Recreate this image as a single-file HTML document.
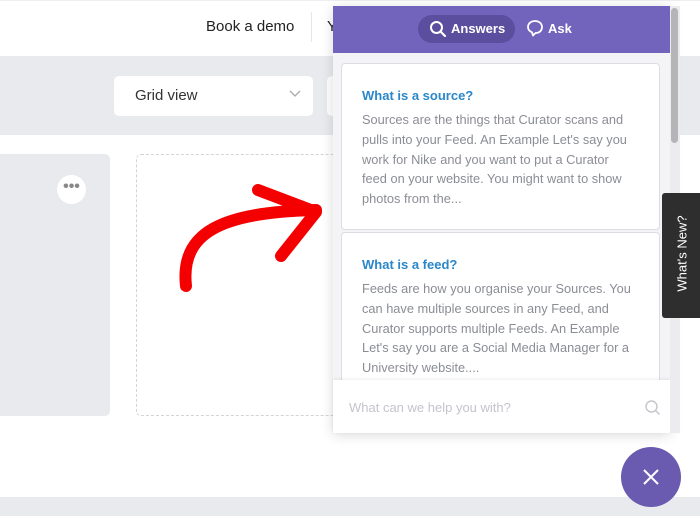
<!DOCTYPE html>
<html><head><style>
body{margin:0;width:700px;height:516px;overflow:hidden;position:relative;font-family:"Liberation Sans",sans-serif;background:#fff}
.a{position:absolute}
.card{position:absolute;left:341px;width:319px;background:#fff;border:1px solid #dcdde2;border-radius:4px;box-sizing:border-box;padding:0 20px}
.card h4{margin:0;color:#2a87c9;font-size:13px;font-weight:bold;position:absolute;top:24px;left:20px}
.card p{margin:0;position:absolute;top:46px;left:20px;width:290px;color:#8a8d94;font-size:12.8px;line-height:19.8px;white-space:nowrap}
</style></head><body>
<div class="a" style="left:0;top:0;width:700px;height:56px;background:#fff;border-top:1px solid #eee"></div>
<div class="a" style="left:206px;top:18px;font-size:15px;color:#222">Book a demo</div>
<div class="a" style="left:311px;top:12px;width:1px;height:30px;background:#e6e6e6"></div>
<div class="a" style="left:327px;top:18px;font-size:15px;color:#222">Y</div>
<div class="a" style="left:0;top:56px;width:700px;height:79px;background:#e9eaee"></div>
<div class="a" style="left:114px;top:76px;width:199px;height:40px;background:#fff;border-radius:5px"></div>
<div class="a" style="left:135px;top:87px;font-size:15px;color:#333">Grid view</div>
<svg class="a" style="left:289px;top:90px" width="12" height="8"><path d="M1 1l5 5 5-5" stroke="#aaa" fill="none" stroke-width="1.3"/></svg>
<div class="a" style="left:327px;top:76px;width:10px;height:40px;background:#fff;border-radius:5px 0 0 5px"></div>
<div class="a" style="left:0;top:154px;width:110px;height:262px;background:#e9eaee;border-radius:0 5px 5px 0"></div>
<div class="a" style="left:57px;top:175px;width:29px;height:29px;background:#fff;border-radius:50%;text-align:center;line-height:24px;color:#888;font-size:16px;font-weight:bold">•••</div>
<div class="a" style="left:136px;top:154px;width:220px;height:260px;border:1px dashed #d4d4d8;border-radius:5px"></div>
<div class="a" style="left:0;top:497px;width:700px;height:19px;background:#e9eaee"></div>
<svg class="a" style="left:0;top:0" width="700" height="516"><g stroke="#f50000" stroke-width="12" fill="none" stroke-linecap="round" stroke-linejoin="round"><path d="M186 286C180 232 222 212 316 210"/><path d="M258 190L316 212L281 256"/></g></svg>
<div class="a" style="left:333px;top:6px;width:337px;height:427px;background:#f4f4f6;box-shadow:0 2px 12px rgba(0,0,0,.15)"></div>
<div class="a" style="left:333px;top:6px;width:337px;height:47px;background:#7264bc"></div>
<div class="a" style="left:418px;top:15px;width:97px;height:28px;background:#5b4e9e;border-radius:14px"></div>
<svg class="a" style="left:429px;top:20px" width="18" height="18"><circle cx="7.5" cy="7.5" r="5.5" stroke="#fff" stroke-width="2" fill="none"/><path d="M11.5 11.5L16 16" stroke="#fff" stroke-width="2.2" stroke-linecap="round"/></svg>
<div class="a" style="left:451px;top:21px;color:#fff;font-size:13px;font-weight:bold">Answers</div>
<svg class="a" style="left:526px;top:19px" width="18" height="18"><path d="M9 2C5 2 2 4.5 2 8c0 2.5 1.5 4.3 4 5.3L7 16.5 9.5 14C13.5 14 16 11.5 16 8S13 2 9 2z" stroke="#fff" stroke-width="1.8" fill="none" stroke-linejoin="round"/></svg>
<div class="a" style="left:548px;top:21px;color:#fff;font-size:13px;font-weight:bold">Ask</div>
<div class="card" style="top:63px;height:167px"><h4>What is a source?</h4><p>Sources are the things that Curator scans and<br>pulls into your Feed. An Example Let's say you<br>work for Nike and you want to put a Curator<br>feed on your website. You might want to show<br>photos from the...</p></div>
<div class="card" style="top:232px;height:160px"><h4>What is a feed?</h4><p>Feeds are how you organise your Sources. You<br>can have multiple sources in any Feed, and<br>Curator supports multiple Feeds. An Example<br>Let's say you are a Social Media Manager for a<br>University website....</p></div>
<div class="a" style="left:333px;top:380px;width:337px;height:53px;background:#fff;box-shadow:0 -1px 3px rgba(0,0,0,.08)"></div>
<div class="a" style="left:349px;top:400px;color:#c3c5cc;font-size:13px">What can we help you with?</div>
<svg class="a" style="left:644px;top:399px" width="18" height="18"><circle cx="7.5" cy="7.5" r="5.5" stroke="#c3c5cc" stroke-width="1.4" fill="none"/><path d="M11.5 11.5L15.5 15.5" stroke="#c3c5cc" stroke-width="1.4"/></svg>
<div class="a" style="left:670px;top:6px;width:10px;height:427px;background:#ececee"></div>
<div class="a" style="left:671px;top:8px;width:7px;height:135px;background:#b5b5b8;border-radius:4px"></div>
<div class="a" style="left:662px;top:193px;width:38px;height:125px;background:#2e2e2e;border-radius:3px 0 0 3px"></div>
<div class="a" style="left:632px;top:246px;width:100px;text-align:center;color:#fff;font-size:13px;transform:rotate(-90deg)">What's New?</div>
<div class="a" style="left:621px;top:447px;width:60px;height:60px;background:#6a5bb0;border-radius:50%"></div>
<svg class="a" style="left:641px;top:467px" width="20" height="20"><path d="M3 3L17 17M17 3L3 17" stroke="#fff" stroke-width="2"/></svg>
</body></html>
